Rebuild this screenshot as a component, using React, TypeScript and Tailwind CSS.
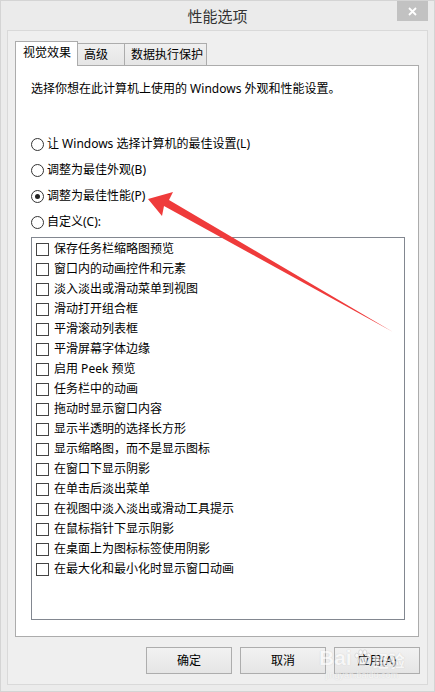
import React from 'react';

const font = "font-['Noto_Sans','Noto_Sans_CJK_SC',sans-serif]";

const effects = [
  '保存任务栏缩略图预览',
  '窗口内的动画控件和元素',
  '淡入淡出或滑动菜单到视图',
  '滑动打开组合框',
  '平滑滚动列表框',
  '平滑屏幕字体边缘',
  '启用 Peek 预览',
  '任务栏中的动画',
  '拖动时显示窗口内容',
  '显示半透明的选择长方形',
  '显示缩略图，而不是显示图标',
  '在窗口下显示阴影',
  '在单击后淡出菜单',
  '在视图中淡入淡出或滑动工具提示',
  '在鼠标指针下显示阴影',
  '在桌面上为图标标签使用阴影',
  '在最大化和最小化时显示窗口动画',
];

const radios = [
  { label: '让 Windows 选择计算机的最佳设置(L)', checked: false },
  { label: '调整为最佳外观(B)', checked: false },
  { label: '调整为最佳性能(P)', checked: true },
  { label: '自定义(C):', checked: false },
];

function Radio({ checked }: { checked: boolean }) {
  return (
    <span className="w-[13px] h-[13px] rounded-full border border-[#333] bg-white flex items-center justify-center shrink-0">
      {checked && <span className="w-[5px] h-[5px] rounded-full bg-[#222]" />}
    </span>
  );
}

function Button({ children }: { children: React.ReactNode }) {
  return (
    <div className="w-[86px] h-[27px] border border-[#adadad] bg-gradient-to-b from-[#f2f2f2] to-[#e5e5e5] flex items-center justify-center text-[12px] text-black leading-none">
      {children}
    </div>
  );
}

export default function App() {
  return (
    <div className={`relative w-[435px] h-[692px] bg-[#ebebeb] border border-[#d4d4d4] ${font} text-black overflow-hidden`}>
      {/* title bar */}
      <div className="relative h-[29px] flex items-center justify-center">
        <span className="text-[15px] leading-none text-[#333] mt-[1px]">性能选项</span>
        <div className="absolute right-[6px] top-0 w-[31px] h-[20px] bg-[#c2c2c2] flex items-center justify-center">
          <svg width="9" height="9" viewBox="0 0 9 9">
            <path d="M1 1 L8 8 M8 1 L1 8" stroke="#fff" strokeWidth="1.8" />
          </svg>
        </div>
      </div>

      {/* client area */}
      <div className="mx-[6px] h-[655px] border border-[#d9d9d9] bg-[#efefef] pt-[9px] px-[7px]">
        {/* tabs */}
        <div className="flex items-end h-[25px] text-[12px]">
          <div className="relative z-10 w-[63px] h-[25px] -mb-px bg-white border border-b-0 border-[#acacac] pl-[7px] pt-[3px] leading-[16px]">
            视觉效果
          </div>
          <div className="w-[47px] h-[22px] bg-gradient-to-b from-[#f0f0f0] to-[#e5e5e5] border-t border-r border-[#acacac] pl-[6px] pt-[3px] leading-[16px]">
            高级
          </div>
          <div className="w-[82px] h-[22px] bg-gradient-to-b from-[#f0f0f0] to-[#e5e5e5] border-t border-r border-[#acacac] pl-[6px] pt-[3px] leading-[16px]">
            数据执行保护
          </div>
        </div>

        {/* panel */}
        <div className="w-[404px] h-[572px] bg-white border border-[#acacac] pl-[15px] pt-[15px] text-[12px]">
          <div className="leading-[16px] h-[16px]">选择你想在此计算机上使用的 Windows 外观和性能设置。</div>

          <div className="mt-[34px] flex flex-col">
            {radios.map((r) => (
              <div key={r.label} className="h-[26px] flex items-center gap-[3px] leading-none">
                <Radio checked={r.checked} />
                <span>{r.label}</span>
              </div>
            ))}
          </div>

          <div className="mt-[2px] w-[374px] h-[383px] border border-[#828790] bg-white pt-[1px] pl-[4px]">
            {effects.map((e) => (
              <div key={e} className="h-[20px] flex items-center gap-[5px] leading-none">
                <span className="w-[13px] h-[13px] border border-[#444] bg-white shrink-0" />
                <span>{e}</span>
              </div>
            ))}
          </div>
        </div>

        {/* buttons */}
        <div className="mt-[10px] flex justify-end gap-[8px]">
          <Button>确定</Button>
          <Button>取消</Button>
          <Button>应用(A)</Button>
        </div>
      </div>

      {/* watermark */}
      <div className="absolute left-[318px] top-[646px] flex flex-col items-center pointer-events-none opacity-60">
        <div className="flex items-end text-white font-bold leading-none [text-shadow:0_0_1px_#b0b0b0]">
          <span className="text-[21px] font-['Liberation_Sans',sans-serif]">Bai</span>
          <svg width="19" height="19" viewBox="0 0 20 20" className="mx-[1px] mb-[1px]">
            <g fill="#fff" stroke="#b0b0b0" strokeWidth="0.6">
              <ellipse cx="10" cy="14" rx="5" ry="4.5" />
              <ellipse cx="4" cy="8" rx="2" ry="2.6" />
              <ellipse cx="8" cy="4.5" rx="2" ry="2.6" />
              <ellipse cx="12.5" cy="4.5" rx="2" ry="2.6" />
              <ellipse cx="16.5" cy="8" rx="2" ry="2.6" />
            </g>
          </svg>
          <span className="text-[16px] font-['Noto_Sans_CJK_SC',sans-serif]">经验</span>
        </div>
        <div className="text-[9px] text-white leading-none mt-[3px] [text-shadow:0_0_1px_#b0b0b0] font-['Liberation_Sans',sans-serif]">
          jingyan.baidu.com
        </div>
      </div>

      {/* red arrow */}
      <svg className="absolute left-0 top-0 pointer-events-none" width="435" height="692" viewBox="0 0 435 692">
        <polygon
          points="147,198 172,191 168,199 392,331 163,205 161,215"
          fill="#ef3b3b"
        />
      </svg>
    </div>
  );
}
